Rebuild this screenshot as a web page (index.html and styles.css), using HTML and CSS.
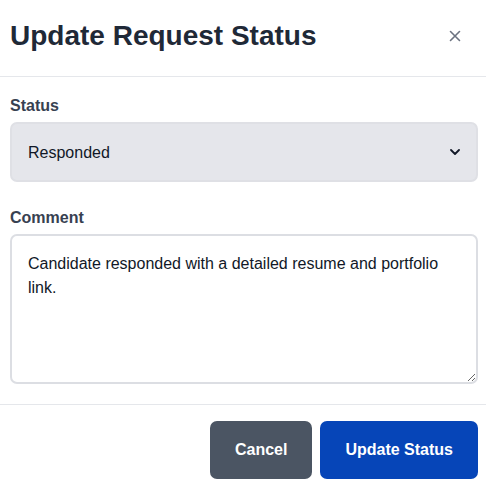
FILE: index.html
```html
<!DOCTYPE html>
<html lang="en">
<head>
  <meta charset="UTF-8" />
  <meta name="viewport" content="width=device-width, initial-scale=1.0" />
  <title>Update Request Status</title>
  <link rel="stylesheet" href="styles.css">
</head>
<body>

  <!-- === MODAL === -->
  <div class="modal">
    <div class="modal-header">
      <h1>Update Request Status</h1>
      <button class="close-btn" aria-label="Close">
        <svg width="12" height="12" viewBox="0 0 12 12">
          <path d="M1.5 1.5 L10.5 10.5 M10.5 1.5 L1.5 10.5" stroke="#6b7280" stroke-width="1.6" fill="none" stroke-linecap="round"/>
        </svg>
      </button>
    </div>

    <div class="modal-body">
      <label class="field-label" for="status">Status</label>
      <div class="select-wrap">
        <select id="status">
          <option>Pending</option>
          <option selected>Responded</option>
          <option>Closed</option>
        </select>
        <svg class="chevron" width="10" height="6" viewBox="0 0 10 6">
          <path d="M1 1 L5 5 L9 1" stroke="#111827" stroke-width="1.8" fill="none" stroke-linecap="round" stroke-linejoin="round"/>
        </svg>
      </div>

      <label class="field-label" for="comment">Comment</label>
      <textarea id="comment">Candidate responded with a detailed resume and portfolio link.</textarea>
    </div>

    <div class="modal-footer">
      <button class="btn btn-cancel">Cancel</button>
      <button class="btn btn-primary">Update Status</button>
    </div>
  </div>

</body>
</html>
```

FILE: styles.css
```css
* {
  margin: 0;
  padding: 0;
  box-sizing: border-box;
}

body {
  font-family: "Liberation Sans", Arial, sans-serif;
  background: #ffffff;
  color: #111827;
}

button {
  cursor: pointer;
  font-family: inherit;
}

/* === EN-TETE === */
.modal-header {
  display: flex;
  align-items: center;
  justify-content: space-between;
  padding: 18px 8px 22px 10px;
  border-bottom: 1px solid #e5e7eb;
}

.modal-header h1 {
  font-size: 28px;
  line-height: 36px;
  font-weight: bold;
  color: #1f2937;
}

.close-btn {
  background: none;
  border: none;
  width: 30px;
  height: 30px;
  display: flex;
  align-items: center;
  justify-content: center;
  margin-right: 8px;
}

/* === FORMULAIRE === */
.modal-body {
  padding: 17px 8px 20px 10px;
}

.field-label {
  display: block;
  font-size: 16px;
  line-height: 24px;
  font-weight: bold;
  color: #374151;
  margin-bottom: 4px;
}

.select-wrap {
  position: relative;
  margin-bottom: 24px;
}

.select-wrap select {
  appearance: none;
  -webkit-appearance: none;
  width: 100%;
  height: 60px;
  padding: 0 40px 0 16px;
  font-family: inherit;
  font-size: 16px;
  color: #111827;
  background: #e5e6eb;
  border: 2px solid #dfe0e5;
  border-radius: 7px;
  outline: none;
}

.chevron {
  position: absolute;
  right: 18px;
  top: 27px;
  pointer-events: none;
}

textarea {
  display: block;
  width: 100%;
  height: 150px;
  padding: 16px;
  font-family: inherit;
  font-size: 16px;
  line-height: 24px;
  color: #111827;
  background: #ffffff;
  border: 2px solid #dcdee3;
  border-radius: 7px;
  resize: vertical;
  outline: none;
}

/* === BOUTONS === */
.modal-footer {
  display: flex;
  justify-content: flex-end;
  gap: 8px;
  padding: 16px 8px 10px 10px;
  border-top: 1px solid #e5e7eb;
}

.btn {
  border: none;
  border-radius: 7px;
  padding: 20px 25px;
  font-size: 16px;
  line-height: 18px;
  font-weight: bold;
  color: #ffffff;
}

.btn-cancel {
  background-color: #4b5563;
}

.btn-primary {
  background-color: #0645b8;
}
```
